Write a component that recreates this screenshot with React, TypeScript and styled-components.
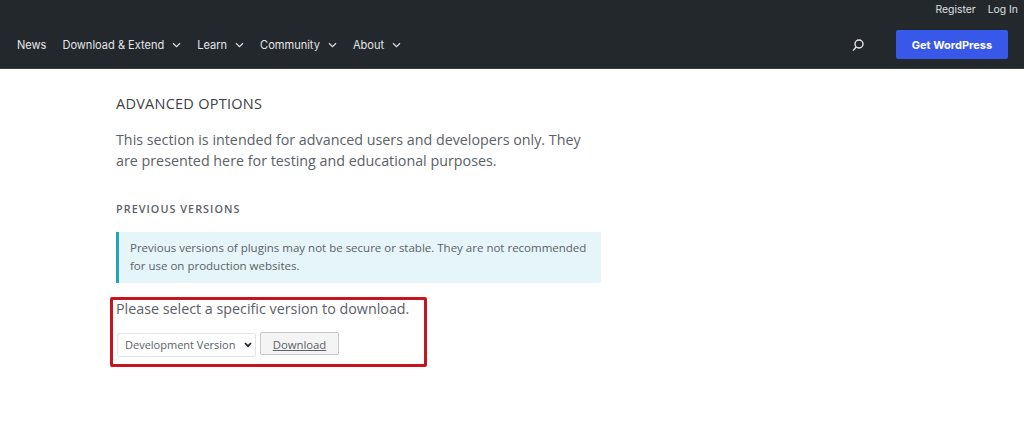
import React from "react";
import { styled, createGlobalStyle } from "styled-components";

const GlobalStyle = createGlobalStyle`
  * {
    box-sizing: border-box;
  }

  html,
  body {
    margin: 0;
    background: #fff;
  }
`;

const Header = styled.header`
  height: 69px;
  background: #23282d;
  border-bottom: 1px solid #3a3f44;
  font-family: Inter, "Liberation Sans", sans-serif;
  color: #dfe0e1;
`;

const TopLinks = styled.div`
  height: 18px;
  padding-right: 6px;
  display: flex;
  justify-content: flex-end;
  align-items: center;
  gap: 12px;
  font-size: 10.4px;
`;

const MainBar = styled.div`
  height: 50px;
  padding: 3px 16px 0 17px;
  display: flex;
  align-items: center;
  justify-content: space-between;
`;

const Nav = styled.nav`
  display: flex;
  align-items: center;
  gap: 16px;
`;

const NavItem = styled.a`
  display: flex;
  align-items: center;
  gap: 8px;
  font-size: 11.05px;
  font-weight: 400;
  color: #e4e5e6;
`;

const Right = styled.div`
  display: flex;
  align-items: center;
  gap: 31px;
`;

const GetButton = styled.a`
  width: 112px;
  height: 29px;
  display: flex;
  align-items: center;
  justify-content: center;
  border-radius: 2px;
  background: #3858e9;
  color: #fff;
  font-size: 11px;
  font-weight: 700;
`;

const Main = styled.main`
  width: 485px;
  margin-left: 116px;
  padding-top: 25px;
  font-family: "Open Sans", "Liberation Sans", sans-serif;
  color: #5b6167;
`;

const Title = styled.h2`
  margin: 0;
  font-size: 14.5px;
  line-height: 19px;
  font-weight: 500;
  letter-spacing: 0.25px;
  color: #3c4146;
`;

const Intro = styled.p`
  margin: 16px 0 0;
  font-size: 14.3px;
  line-height: 21px;
`;

const SubTitle = styled.h3`
  margin: 31px 0 0;
  font-size: 10.8px;
  line-height: 14px;
  font-weight: 600;
  letter-spacing: 1.05px;
`;

const Notice = styled.div`
  margin-top: 16px;
  height: 51px;
  padding: 7px 10px 0 11px;
  background: #e5f5fa;
  border-left: 3px solid #1ea5bd;
  font-size: 11.5px;
  line-height: 18px;
`;

const Highlight = styled.section`
  width: 317px;
  height: 70px;
  margin: 14px 0 0 -6px;
  padding: 0 0 0 3px;
  border: 3px solid #c8141e;
  border-radius: 2px;
`;

const SelectLead = styled.p`
  margin: 0;
  font-size: 14.3px;
  line-height: 18px;
`;

const Controls = styled.div`
  margin-top: 14px;
  margin-left: 1px;
  display: flex;
  align-items: flex-start;
  gap: 4px;
`;

const SelectWrap = styled.div`
  position: relative;
  width: 139px;
  height: 24px;
`;

const VersionSelect = styled.select`
  appearance: none;
  width: 100%;
  height: 100%;
  padding: 0 0 0 7px;
  background: #fff;
  border: 1px solid #e2e4e7;
  border-radius: 2px;
  font-family: inherit;
  font-size: 11px;
  color: #5b6167;
`;

const SelectArrow = styled.svg`
  position: absolute;
  right: 4px;
  top: 10px;
  pointer-events: none;
`;

const DownloadButton = styled.button`
  width: 79px;
  height: 23px;
  padding: 1px 0 0;
  background: #f4f4f4;
  border: 1px solid #c6c8ca;
  border-radius: 2px;
  font-family: inherit;
  font-size: 11.3px;
  color: #5b6167;
  text-decoration: underline;
`;

const navItems: { label: string; hasMenu: boolean }[] = [
  { label: "News", hasMenu: false },
  { label: "Download & Extend", hasMenu: true },
  { label: "Learn", hasMenu: true },
  { label: "Community", hasMenu: true },
  { label: "About", hasMenu: true },
];

const NavChevron = () => (
  <svg width="9" height="6" viewBox="0 0 9 6" fill="none" stroke="#dfe0e1" strokeWidth="1.2">
    <path d="M1 1.2 4.5 4.6 8 1.2" />
  </svg>
);

const SearchIcon = () => (
  <svg width="14" height="14" viewBox="0 0 14 14" fill="none" stroke="#e6e7e8" strokeWidth="1.4">
    <circle cx="8" cy="6" r="4" />
    <path d="M5.2 9 2 12.6" />
  </svg>
);

const App: React.FC = () => {
  return (
    <>
      <GlobalStyle />
      <Header>
        <TopLinks>
          <span>Register</span>
          <span>Log In</span>
        </TopLinks>
        <MainBar>
          <Nav>
            {navItems.map((item) => (
              <NavItem key={item.label}>
                {item.label}
                {item.hasMenu && <NavChevron />}
              </NavItem>
            ))}
          </Nav>
          <Right>
            <SearchIcon />
            <GetButton>Get WordPress</GetButton>
          </Right>
        </MainBar>
      </Header>
      <Main>
        <Title>ADVANCED OPTIONS</Title>
        <Intro>
          This section is intended for advanced users and developers only. They are presented here
          for testing and educational purposes.
        </Intro>
        <SubTitle>PREVIOUS VERSIONS</SubTitle>
        <Notice>
          Previous versions of plugins may not be secure or stable. They are not recommended for use
          on production websites.
        </Notice>
        <Highlight>
          <SelectLead>Please select a specific version to download.</SelectLead>
          <Controls>
            <SelectWrap>
              <VersionSelect defaultValue="dev">
                <option value="dev">Development Version</option>
              </VersionSelect>
              <SelectArrow width="8" height="6" viewBox="0 0 8 6" fill="none" stroke="#23282d" strokeWidth="1.8">
                <path d="M1 1 4 4.2 7 1" />
              </SelectArrow>
            </SelectWrap>
            <DownloadButton>Download</DownloadButton>
          </Controls>
        </Highlight>
      </Main>
    </>
  );
};

export default App;
